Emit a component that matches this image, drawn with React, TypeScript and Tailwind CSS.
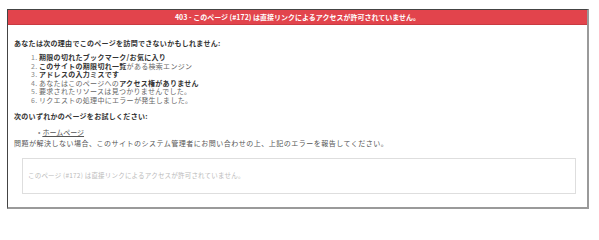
const font = "font-['Noto_Sans_CJK_JP','Liberation_Sans',sans-serif]";

const reasons: { bold?: string; normal?: string; boldAfter?: string }[] = [
  { bold: "期限の切れたブックマーク/お気に入り" },
  { bold: "このサイトの期限切れ一覧", normal: "がある検索エンジン" },
  { bold: "アドレスの入力ミスです" },
  { normal: "あなたはこのページへの", boldAfter: "アクセス権がありません" },
  { normal: "要求されたリソースは見つかりませんでした。" },
  { normal: "リクエストの処理中にエラーが発生しました。" },
];

export default function App() {
  return (
    <div className={`w-[599px] h-[220px] bg-white pt-[9px] pl-[7px] ${font}`}>
      <div className="w-[582px] h-[200px] border-l border-t border-[#444] border-r-2 border-b-2 border-r-[#9a9a9a] border-b-[#9a9a9a] bg-white">
        <div className="h-[15px] bg-[#e2444c] border-b border-[#c93a41] flex items-center justify-center text-white font-bold text-[7px] leading-none">
          403 - このページ (#172) は直接リンクによるアクセスが許可されていません。
        </div>
        <div className="px-[6px]">
          <p className="mt-[14px] text-[7px] leading-[9px] font-bold text-[#333] tracking-[0.3px]">
            あなたは次の理由でこのページを訪問できないかもしれません:
          </p>
          <ol className="mt-[5px] pl-[17px] text-[7px] leading-[8.6px] text-[#666] tracking-[0.3px]">
            {reasons.map((r, i) => (
              <li key={i} className="flex">
                <span className="w-[8px] text-[#888]">{i + 1}.</span>
                {r.bold && <span className="font-bold text-[#333]">{r.bold}</span>}
                {r.normal && <span>{r.normal}</span>}
                {r.boldAfter && <span className="font-bold text-[#333]">{r.boldAfter}</span>}
              </li>
            ))}
          </ol>
          <p className="mt-[7px] text-[7px] leading-[9px] font-bold text-[#333] tracking-[0.3px]">
            次のいずれかのページをお試しください:
          </p>
          <ul className="mt-[7px] pl-[24px] text-[7px] leading-[9px] text-[#666]">
            <li className="flex items-center gap-[2px]">
              <span className="text-[#888]">•</span>
              <a className="underline text-[#555]">ホームページ</a>
            </li>
          </ul>
          <p className="mt-[2px] text-[7px] leading-[9px] text-[#555] tracking-[0.5px]">
            問題が解決しない場合、このサイトのシステム管理者にお問い合わせの上、上記のエラーを報告してください。
          </p>
          <div className="mt-[10px] ml-[8px] w-[554px] h-[36px] border border-[#dedede] flex items-center pl-[5px] text-[6.5px] text-[#bbb] tracking-[0.2px]">
            このページ (#172) は直接リンクによるアクセスが許可されていません。
          </div>
        </div>
      </div>
    </div>
  );
}
